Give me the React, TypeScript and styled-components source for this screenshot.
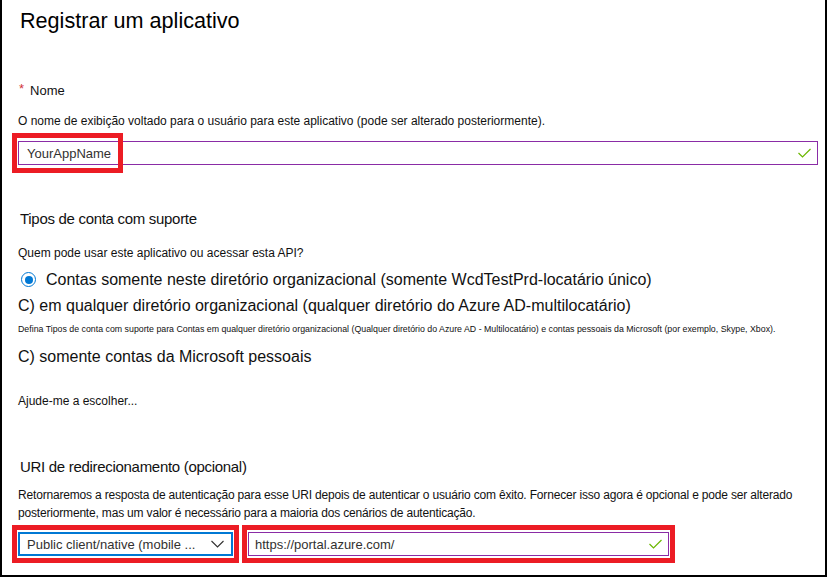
import React from "react";
import styled, { createGlobalStyle } from "styled-components";

const Global = createGlobalStyle`
  html, body { margin: 0; padding: 0; background: #ffffff; }
  body { font-family: "Liberation Sans", Arial, sans-serif; color: #111111; }
  * { box-sizing: border-box; }
`;

const Frame = styled.div`
  width: 827px;
  height: 577px;
  border: 2px solid #000000;
  border-top: none;
  padding: 0 7px 0 16px;
  display: flex;
  flex-direction: column;
  background: #ffffff;
`;

const Title = styled.h1`
  margin: 6px 0 0 2px;
  font-weight: 400;
  font-size: 21.6px;
  line-height: 30px;
  color: #000000;
`;

const FieldLabel = styled.div`
  margin-top: 47px;
  font-size: 13px;
  line-height: 16px;
  display: flex;
  align-items: flex-start;
  color: #111111;
`;

const Required = styled.span`
  color: #d13438;
  font-size: 13px;
  line-height: 12px;
  margin: 0 6px 0 1px;
`;

const Help = styled.p<{ $top: number }>`
  margin: ${(p) => p.$top}px 0 0 0;
  font-size: 12px;
  line-height: 16px;
  color: #111111;
`;

const Paragraph = styled.p`
  margin: 9.5px 0 0 0;
  font-size: 12px;
  line-height: 18px;
  letter-spacing: -0.18px;
  max-width: 800px;
  color: #111111;
`;

const SectionTitle = styled.h2<{ $top: number }>`
  margin: ${(p) => p.$top}px 0 0 2px;
  font-weight: 400;
  font-size: 15px;
  line-height: 20px;
  letter-spacing: -0.3px;
  color: #111111;
`;

const TextBox = styled.div`
  position: relative;
  height: 24px;
  border: 1px solid #8a2ca6;
  display: flex;
  align-items: center;
  justify-content: space-between;
  padding: 0 6px 0 8px;
  font-size: 13px;
  color: #323130;
  background: #ffffff;
`;

const NameBox = styled(TextBox)`
  margin-top: 12.5px;
`;

const Highlight = styled.div`
  position: absolute;
  left: -7px;
  top: -9px;
  width: 111px;
  height: 40px;
  border: 5px solid #ec1c24;
  pointer-events: none;
`;

const RadioRow = styled.div`
  margin-top: 7.5px;
  display: flex;
  align-items: center;
  font-size: 16px;
  line-height: 22px;
  color: #111111;
`;

const RadioCircle = styled.span`
  width: 15px;
  height: 15px;
  margin: 0 10px 0 3px;
  border: 1.5px solid #0078d4;
  border-radius: 50%;
  display: flex;
  align-items: center;
  justify-content: center;
  &::after {
    content: "";
    width: 8px;
    height: 8px;
    border-radius: 50%;
    background: #0078d4;
  }
`;

const Option = styled.div<{ $top: number }>`
  margin-top: ${(p) => p.$top}px;
  font-size: 16px;
  line-height: 22px;
  color: #111111;
`;

const Fine = styled.div`
  margin-top: 6.5px;
  font-size: 8.8px;
  line-height: 12px;
  color: #111111;
  white-space: nowrap;
`;

const UriRow = styled.div`
  margin: 3px 0 0 -6px;
  display: flex;
  gap: 3px;
`;

const Marked = styled.div<{ $width: number }>`
  width: ${(p) => p.$width}px;
  border: 5px solid #ec1c24;
  padding: 2px 1px;
`;

const Select = styled.div`
  height: 24px;
  border: 2px solid #0078d4;
  display: flex;
  align-items: center;
  justify-content: space-between;
  padding: 0 7px 0 7px;
  font-size: 13px;
  color: #323130;
`;

const UrlBox = styled(TextBox)`
  padding-left: 6px;
`;

const Check = () => (
  <svg width="13" height="10" viewBox="0 0 13 10">
    <polyline points="0.5,5 4.5,9 12.5,1" fill="none" stroke="#6bb700" strokeWidth="1.2" />
  </svg>
);

const Chevron = () => (
  <svg width="13" height="8" viewBox="0 0 13 8">
    <polyline points="0.5,1 6.5,7 12.5,1" fill="none" stroke="#323130" strokeWidth="1.1" />
  </svg>
);

export default function App() {
  return (
    <>
      <Global />
      <Frame>
        <Title>Registrar um aplicativo</Title>

        <FieldLabel>
          <Required>*</Required>
          Nome
        </FieldLabel>
        <Help $top={13.5}>
          O nome de exibição voltado para o usuário para este aplicativo (pode ser alterado posteriormente).
        </Help>
        <NameBox>
          <span>YourAppName</span>
          <Check />
          <Highlight />
        </NameBox>

        <SectionTitle $top={44}>Tipos de conta com suporte</SectionTitle>
        <Help $top={16}>Quem pode usar este aplicativo ou acessar esta API?</Help>
        <RadioRow>
          <RadioCircle />
          Contas somente neste diretório organizacional (somente WcdTestPrd-locatário único)
        </RadioRow>
        <Option $top={4}>
          C) em qualquer diretório organizacional (qualquer diretório do Azure AD-multilocatário)
        </Option>
        <Fine>
          Defina Tipos de conta com suporte para Contas em qualquer diretório organizacional (Qualquer diretório do
          Azure AD - Multilocatário) e contas pessoais da Microsoft (por exemplo, Skype, Xbox).
        </Fine>
        <Option $top={11}>C) somente contas da Microsoft pessoais</Option>
        <Help $top={25}>Ajude-me a escolher...</Help>

        <SectionTitle $top={47.5}>URI de redirecionamento (opcional)</SectionTitle>
        <Paragraph>
          Retornaremos a resposta de autenticação para esse URI depois de autenticar o usuário com êxito. Fornecer
          isso agora é opcional e pode ser alterado posteriormente, mas um valor é necessário para a maioria dos
          cenários de autenticação.
        </Paragraph>
        <UriRow>
          <Marked $width={227}>
            <Select>
              <span>Public client/native (mobile ...</span>
              <Chevron />
            </Select>
          </Marked>
          <Marked $width={433}>
            <UrlBox>
              <span>https://portal.azure.com/</span>
              <Check />
            </UrlBox>
          </Marked>
        </UriRow>
      </Frame>
    </>
  );
}
